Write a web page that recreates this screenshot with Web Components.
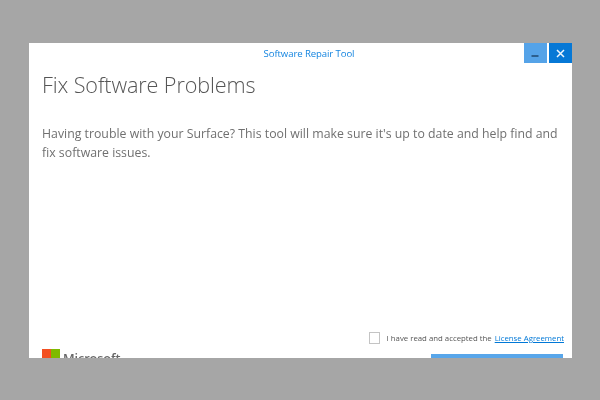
<!DOCTYPE html>
<html><head><meta charset="utf-8"><style>
html,body{margin:0;padding:0;width:600px;height:400px;overflow:hidden;background:#a6a6a6}
body{font-family:"Open Sans","Noto Sans",sans-serif}
</style></head><body>
<repair-window>
  <span slot="title">Software Repair Tool</span>
  <span slot="heading">Fix Software Problems</span>
  <span slot="body">Having trouble with your Surface? This tool will make sure it's up to date and help find and fix software issues.</span>
</repair-window>
<script>
class WinButtons extends HTMLElement{constructor(){super();this.attachShadow({mode:'open'}).innerHTML=`<style>
:host{display:flex;gap:2px}
div{width:23px;height:20px;display:flex;align-items:center;justify-content:center}
.min{background:#55a3e8}.close{background:#0678d6}
svg{display:block}
</style>
<div class="min"><svg width="9" height="9" viewBox="0 0 9 9"><rect x="0.5" y="6" width="7" height="2" fill="#2c5f8e"/></svg></div>
<div class="close"><svg width="9" height="9" viewBox="0 0 9 9"><path d="M1 1L8 8M8 1L1 8" stroke="#eef6fd" stroke-width="1.5"/></svg></div>`}}
customElements.define('win-buttons',WinButtons);

class MsLogo extends HTMLElement{constructor(){super();this.attachShadow({mode:'open'}).innerHTML=`<style>
:host{display:flex;align-items:flex-start;gap:3.5px}
.g{display:grid;grid-template-columns:8.5px 8.5px;grid-auto-rows:8.5px;gap:.5px}
.g i:nth-child(1){background:#f25022}.g i:nth-child(2){background:#7fba00}.g i:nth-child(3){background:#00a4ef}.g i:nth-child(4){background:#ffb900}
span{font:600 12.7px/18px "Open Sans",sans-serif;color:#666;letter-spacing:-.1px}
</style><div class="g"><i></i><i></i><i></i><i></i></div><span>Microsoft</span>`}}
customElements.define('ms-logo',MsLogo);

class LicenseRow extends HTMLElement{constructor(){super();this.attachShadow({mode:'open'}).innerHTML=`<style>
:host{display:flex;align-items:center;font:400 7.8px/12px "Open Sans",sans-serif;color:#555}
.c{box-sizing:border-box;width:11px;height:12px;border:1px solid #c4c4c4;margin-right:7px}
a{color:#0078d7;text-decoration:underline;margin-left:3px}
</style><div class="c"></div><span>I have read and accepted the</span><a>License Agreement</a>`}}
customElements.define('license-row',LicenseRow);

class RepairWindow extends HTMLElement{constructor(){super();this.attachShadow({mode:'open'}).innerHTML=`<style>
:host{display:flex;flex-direction:column;box-sizing:border-box;width:543px;height:315px;margin:43px 0 0 29px;background:#fff;overflow:hidden;filter:blur(.45px)}
.bar{display:flex;justify-content:flex-end;position:relative;flex:none;height:20px}
.title{position:absolute;left:17px;right:0;top:3.5px;text-align:center;font:400 9.6px/14px "Open Sans",sans-serif;color:#1585e0;letter-spacing:-.1px}
.main{flex:1;min-height:0;padding:7px 13px 0}
h1{margin:0;font:300 21.6px/30px "Open Sans",sans-serif;color:#555;letter-spacing:-.1px}
p{margin:25px 0 0;font:400 12.3px/18.5px "Open Sans",sans-serif;color:#707070;width:525px}
.foot{flex:none;height:26px;display:flex;justify-content:space-between;align-items:flex-start;padding:0 8px 0 13px}
ms-logo{margin-top:17px}
.right{display:flex;flex-direction:column;align-items:flex-end}
.btn{width:132px;height:20px;background:#58a6ea;margin:10px 1px 0 0}
</style>
<div class="bar"><div class="title"><slot name="title"></slot></div><win-buttons></win-buttons></div>
<div class="main"><h1><slot name="heading"></slot></h1><p><slot name="body"></slot></p></div>
<div class="foot"><ms-logo></ms-logo><div class="right"><license-row></license-row><div class="btn"></div></div></div>`}}
customElements.define('repair-window',RepairWindow);
</script></body></html>
